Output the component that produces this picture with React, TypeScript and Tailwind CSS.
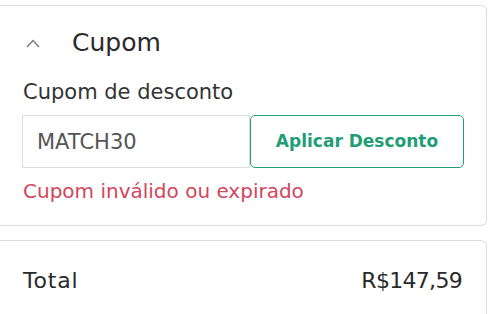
const font = { fontFamily: '"DejaVu Sans", "Noto Sans", sans-serif' };

export default function App() {
  return (
    <div
      className="h-[314px] w-[500px] overflow-hidden bg-white text-[#2b2b2b]"
      style={font}
    >
      <div className="pt-[5px] pr-[13px]">
        <section className="h-[221px] rounded-r-[6px] border border-l-0 border-[#dcdcdc] bg-white">
          <div className="flex h-[30px] items-center pl-[26px] mt-[22px]">
            <svg width="14" height="9" viewBox="0 0 14 9" className="shrink-0">
              <polyline
                points="1,8 7,1.5 13,8"
                fill="none"
                stroke="#7a7a7a"
                strokeWidth="1.4"
              />
            </svg>
            <h2 className="ml-[32px] text-[25px] leading-[30px] text-[#2a2a2a]">Cupom</h2>
          </div>
          <p className="mt-[21px] pl-[23px] text-[21px] leading-[26px] text-[#333]">
            Cupom de desconto
          </p>
          <div className="mt-[10px] flex pl-[22px]">
            <input
              readOnly
              value="MATCH30"
              className="h-[53px] w-[228px] border border-[#dddddd] bg-white px-[14px] text-[21px] text-[#555] outline-none"
              style={font}
            />
            <button
              type="button"
              className="h-[53px] w-[214px] rounded-[5px] border-[1.5px] border-[#1f9e76] bg-white text-[17px] font-bold text-[#1f9e76]"
              style={font}
            >
              Aplicar Desconto
            </button>
          </div>
          <p className="mt-[11px] pl-[23px] text-[20px] leading-[24px] text-[#d2465c]">
            Cupom inválido ou expirado
          </p>
        </section>
        <section className="mt-[14px] h-[100px] rounded-tr-[6px] border border-l-0 border-b-0 border-[#dcdcdc] bg-white">
          <div className="flex items-center justify-between pl-[23px] pr-[24px] pt-[25px]">
            <span className="text-[22px] leading-[30px] tracking-[0.8px] text-[#2a2a2a]">Total</span>
            <span className="text-[22px] leading-[30px] tracking-[-0.7px] text-[#2a2a2a]">R$147,59</span>
          </div>
        </section>
      </div>
    </div>
  );
}
